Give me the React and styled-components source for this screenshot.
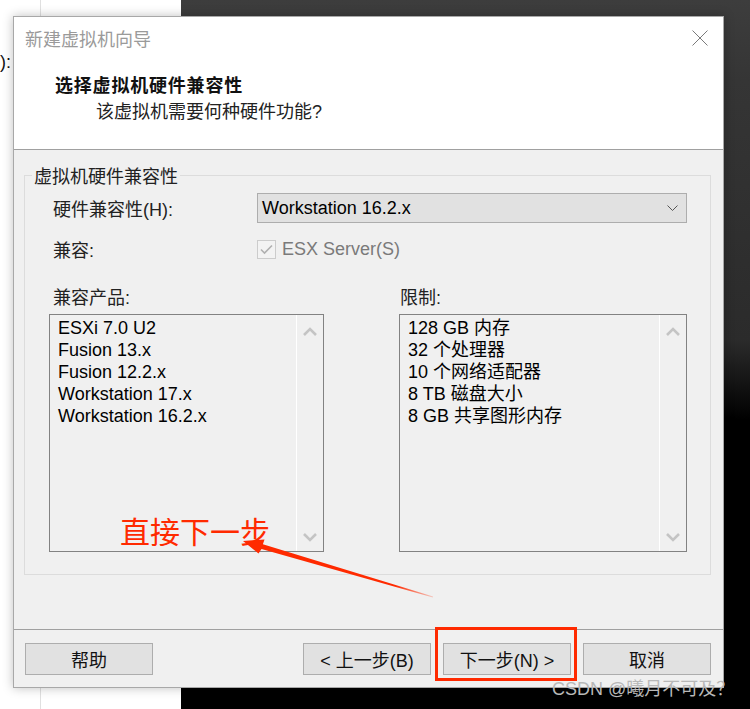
import React from 'react'
import styled, { createGlobalStyle } from 'styled-components'

const GlobalStyle = createGlobalStyle`
  html, body { margin: 0; padding: 0; }
  body { font-family: "Liberation Sans", "Noto Sans CJK SC", sans-serif; }
`

const Page = styled.div`
  position: relative;
  width: 750px;
  height: 709px;
  overflow: hidden;
  box-sizing: border-box;
  padding: 16px 0 0 13px;
  background:
    linear-gradient(to right, #fff 0 40px, #e0e0e0 40px 41px, #fff 41px 181px, transparent 181px),
    linear-gradient(to bottom, #3d3d3d 0, #353535 80px, #2b2b2b 340px, #000 420px);
`

const BehindText = styled.span`
  position: absolute;
  left: 0;
  top: 52px;
  font-size: 18px;
  color: #111;
`

const Dialog = styled.div`
  position: relative;
  z-index: 1;
  width: 711px;
  height: 672px;
  box-sizing: border-box;
  border: 1px solid #a8a8a8;
  background: #fff;
  display: flex;
  flex-direction: column;
  box-shadow: 0 0 10px rgba(0, 0, 0, 0.25);
  font-size: 18px;
  color: #111;
`

const TitleBar = styled.div`
  height: 41px;
  display: flex;
  align-items: center;
  justify-content: space-between;
  padding: 0 15px 0 11px;
  color: #9a9a9a;
  font-family: "Noto Sans CJK SC", sans-serif;
`

const Header = styled.div`
  height: 92px;
  box-sizing: border-box;
  border-bottom: 1px solid #a0a0a0;
  padding-top: 14px;
  display: flex;
  flex-direction: column;
  gap: 4px;
`

const Heading = styled.div`
  margin-left: 41px;
  line-height: 24px;
  font-weight: bold;
  letter-spacing: 0.8px;
  font-family: "Noto Sans CJK SC", sans-serif;
`

const SubHeading = styled.div`
  margin-left: 82px;
  line-height: 24px;
  color: #222;
`

const Body = styled.div`
  flex: 1;
  background: #f0f0f0;
  padding: 14px 12px 0 10px;
`

const Group = styled.fieldset`
  margin: 0;
  padding: 0;
  border: 1px solid #dcdcdc;
  min-inline-size: 0;
`

const Legend = styled.legend`
  margin-left: 7px;
  padding: 0 2px;
  line-height: 22px;
  color: #222;
  font-family: "Noto Sans CJK SC", sans-serif;
`

const GroupInner = styled.div`
  padding: 7px 23px 22px 24px;
`

const FormRow = styled.div`
  display: grid;
  grid-template-columns: 204px 430px;
  align-items: center;
  padding-left: 4px;
  height: ${({ h }) => h}px;
  margin-top: ${({ mt }) => mt || 0}px;
  color: #222;
`

const Combo = styled.div`
  height: 30px;
  box-sizing: border-box;
  border: 1px solid #adadad;
  background: #e1e1e1;
  display: flex;
  align-items: center;
  justify-content: space-between;
  padding: 0 8px 0 4px;
  color: #000;
`

const CheckLine = styled.div`
  display: flex;
  align-items: center;
  gap: 6px;
  color: #7a7a7a;
`

const CheckBox = styled.span`
  width: 19px;
  height: 19px;
  box-sizing: border-box;
  border: 1px solid #cccccc;
  background: #f3f3f3;
  display: flex;
  align-items: center;
  justify-content: center;
`

const Columns = styled.div`
  display: grid;
  grid-template-columns: 275px 288px;
  column-gap: 75px;
  margin-top: 31px;
`

const Column = styled.div`
  display: flex;
  flex-direction: column;
  gap: 5px;
`

const ColumnLabel = styled.div`
  line-height: 22px;
  padding-left: ${({ inset }) => inset}px;
  color: #222;
`

const ListBox = styled.div`
  height: 238px;
  box-sizing: border-box;
  border: 1px solid #828282;
  display: flex;
`

const ListItems = styled.div`
  flex: 1;
  padding: 2px 0 0 8px;
  line-height: 22px;
  color: #000;
`

const ScrollTrack = styled.div`
  width: 27px;
  box-sizing: border-box;
  border-left: 1px solid #fff;
  display: flex;
  flex-direction: column;
  align-items: center;
  justify-content: space-between;
  padding: 12px 0 9px;
`

const Footer = styled.div`
  height: 58px;
  box-sizing: border-box;
  border-top: 1px solid #a0a0a0;
  background: #f0f0f0;
  padding: 13px 12px 0 11px;
  display: flex;
  gap: 12px;
`

const Button = styled.div`
  width: 128px;
  height: 32px;
  box-sizing: border-box;
  border: 1px solid #adadad;
  background: #e1e1e1;
  display: flex;
  align-items: center;
  justify-content: center;
  color: #111;
  margin-right: ${({ push }) => (push ? 'auto' : '0')};
`

const Annotation = styled.div`
  position: absolute;
  z-index: 2;
  left: 120px;
  top: 510px;
  font-size: 30px;
  line-height: 40px;
  color: #ff2a00;
  font-family: "Noto Sans CJK SC", sans-serif;
`

const Highlight = styled.div`
  position: absolute;
  z-index: 2;
  left: 435px;
  top: 627px;
  width: 142px;
  height: 54px;
  box-sizing: border-box;
  border: 3px solid #ff2a00;
`

const Overlay = styled.svg`
  position: absolute;
  z-index: 2;
  left: 0;
  top: 0;
  pointer-events: none;
`

const Watermark = styled.div`
  position: absolute;
  z-index: 3;
  left: 552px;
  top: 677px;
  line-height: 24px;
  font-size: 18px;
  color: #b8b8b8;
`

const Chevron = ({ down }) => (
  <svg width="14" height="9" viewBox="0 0 14 9">
    <polyline
      points={down ? '1,1 7,7 13,1' : '1,8 7,2 13,8'}
      fill="none"
      stroke="#c4c4c4"
      strokeWidth="2.6"
    />
  </svg>
)

const products = ['ESXi 7.0 U2', 'Fusion 13.x', 'Fusion 12.2.x', 'Workstation 17.x', 'Workstation 16.2.x']
const limits = ['128 GB 内存', '32 个处理器', '10 个网络适配器', '8 TB 磁盘大小', '8 GB 共享图形内存']

const List = ({ items }) => (
  <ListBox>
    <ListItems>
      {items.map((t) => (
        <div key={t}>{t}</div>
      ))}
    </ListItems>
    <ScrollTrack>
      <Chevron />
      <Chevron down />
    </ScrollTrack>
  </ListBox>
)

export default function App() {
  return (
    <>
      <GlobalStyle />
      <Page>
        <BehindText>):</BehindText>
        <Dialog>
          <TitleBar>
            <span>新建虚拟机向导</span>
            <svg width="16" height="16" viewBox="0 0 16 16">
              <path d="M0.5 0.5 L15.5 15.5 M15.5 0.5 L0.5 15.5" stroke="#7a7a7a" strokeWidth="1" />
            </svg>
          </TitleBar>
          <Header>
            <Heading>选择虚拟机硬件兼容性</Heading>
            <SubHeading>该虚拟机需要何种硬件功能?</SubHeading>
          </Header>
          <Body>
            <Group>
              <Legend>虚拟机硬件兼容性</Legend>
              <GroupInner>
                <FormRow h={30}>
                  <span>硬件兼容性(H):</span>
                  <Combo>
                    <span>Workstation 16.2.x</span>
                    <svg width="11" height="6" viewBox="0 0 11 6">
                      <polyline points="0.5,0.5 5.5,5.5 10.5,0.5" fill="none" stroke="#555" strokeWidth="1" />
                    </svg>
                  </Combo>
                </FormRow>
                <FormRow h={20} mt={13}>
                  <span>兼容:</span>
                  <CheckLine>
                    <CheckBox>
                      <svg width="13" height="11" viewBox="0 0 13 11">
                        <polyline points="1,5.5 4.5,9 12,1.5" fill="none" stroke="#b0b0b0" strokeWidth="1.6" />
                      </svg>
                    </CheckBox>
                    <span>ESX Server(S)</span>
                  </CheckLine>
                </FormRow>
                <Columns>
                  <Column>
                    <ColumnLabel inset={4}>兼容产品:</ColumnLabel>
                    <List items={products} />
                  </Column>
                  <Column>
                    <ColumnLabel inset={1}>限制:</ColumnLabel>
                    <List items={limits} />
                  </Column>
                </Columns>
              </GroupInner>
            </Group>
          </Body>
          <Footer>
            <Button push>帮助</Button>
            <Button>&lt; 上一步(B)</Button>
            <Button>下一步(N) &gt;</Button>
            <Button>取消</Button>
          </Footer>
        </Dialog>
        <Annotation>直接下一步</Annotation>
        <Overlay width="750" height="709" viewBox="0 0 750 709">
          <defs>
            <linearGradient id="fade" x1="243" y1="541" x2="433" y2="597" gradientUnits="userSpaceOnUse">
              <stop offset="0" stopColor="#ff2a00" />
              <stop offset="0.8" stopColor="#ff2a00" />
              <stop offset="1" stopColor="#ff2a00" stopOpacity="0.2" />
            </linearGradient>
          </defs>
          <polygon
            points="243,541 264.5,539.5 262.9,544.3 433.1,596.6 432.9,597.4 261.5,549.1 258.5,553.5"
            fill="url(#fade)"
          />
        </Overlay>
        <Highlight />
        <Watermark>CSDN @曦月不可及？</Watermark>
      </Page>
    </>
  )
}
